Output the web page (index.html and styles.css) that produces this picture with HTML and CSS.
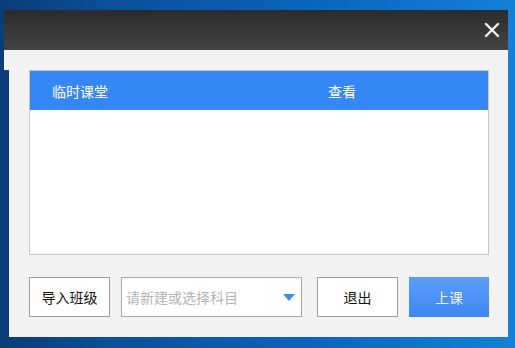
FILE: index.html
```html
<!DOCTYPE html>
<html lang="zh">
<head>
<meta charset="utf-8">
<link rel="stylesheet" href="styles.css">
</head>
<body>
<div class="desk">
  <div class="win">
    <div class="titlebar">
      <svg class="close" width="16" height="16" viewBox="0 0 16 16"><path d="M2 2 L14 14 M14 2 L2 14" stroke="#f2f2f2" stroke-width="2.4" stroke-linecap="round" fill="none"/></svg>
    </div>
    <div class="strip"></div>
    <div class="main">
      <div class="table">
        <div class="thead">
          <span class="c1">临时课堂</span>
          <span class="c2">查看</span>
        </div>
      </div>
      <div class="actions">
        <div class="btn b1">导入班级</div>
        <div class="select">
          <span class="ph">请新建或选择科目</span>
          <svg class="caret" width="12" height="7" viewBox="0 0 12 7"><path d="M0 0 H12 L6 7 Z" fill="#3b8de8"/></svg>
        </div>
        <div class="btn b2">退出</div>
        <div class="btn primary">上课</div>
      </div>
    </div>
  </div>
</div>
</body>
</html>
```
FILE: styles.css
```css
* { box-sizing: border-box; }
html, body { margin: 0; padding: 0; }
body {
  width: 515px; height: 348px; overflow: hidden;
  font-family: "Noto Sans CJK SC", "Noto Sans", sans-serif;
  font-size: 14px;
  background: linear-gradient(90deg, #0a3c78 0%, #0b4f98 20%, #0a64bd 60%, #1580d8 100%);
}
.desk { padding-top: 10px; padding-left: 4px; }
.win { width: 504px; }
.titlebar {
  height: 40px;
  background: linear-gradient(180deg, #2b2b2b 0%, #3a3a3a 60%, #444 100%);
  display: flex; align-items: center; justify-content: flex-end;
  padding-right: 8px;
}
.strip { height: 20px; background: #f2f2f2; }
.main {
  margin-left: 5px; width: 499px;
  background: #f2f2f2;
  padding: 0 19px 20px 20px;
}
.table {
  height: 185px; background: #fff;
  border: 1px solid #c6c6c6;
}
.thead {
  height: 39px; background: #3587f5; color: #fff;
  display: flex; align-items: center;
  padding-left: 22px;
}
.c1 { width: 276px; }
.actions {
  margin-top: 22px; display: flex; height: 40px;
}
.btn {
  height: 40px; border: 1px solid #9e9e9e; background: #fff;
  display: flex; align-items: center; justify-content: center;
  color: #111;
}
.b1 { width: 81px; }
.select {
  width: 181px; margin-left: 11px; border: 1px solid #aaa; background: #fff;
  display: flex; align-items: center; justify-content: space-between;
  padding: 0 6px 0 4px;
}
.ph { color: #b4b4b4; }
.b2 { width: 81px; margin-left: 15px; }
.primary {
  width: 80px; margin-left: 11px; border: none;
  background: linear-gradient(180deg, #5b9ef9 0%, #3e86f2 100%);
  color: #eef4ff;
}
```
